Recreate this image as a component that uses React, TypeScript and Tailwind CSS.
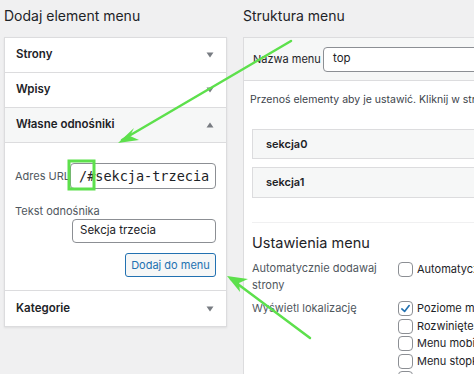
import React from 'react';

const font = { fontFamily: 'Inter, "Noto Sans", sans-serif' };

function Caret({ up = false }: { up?: boolean }) {
  return (
    <svg width="8" height="6" viewBox="0 0 8 6" className="text-[#787c82]">
      {up ? <path d="M0.5 5.5 L4 0.5 L7.5 5.5 Z" fill="currentColor" /> : <path d="M0.5 0.5 L7.5 0.5 L4 5.5 Z" fill="currentColor" />}
    </svg>
  );
}

function Row({ title, up, shaded, last }: { title: string; up?: boolean; shaded?: boolean; last?: boolean }) {
  return (
    <div className={`flex items-center justify-between h-[35px] pl-[11px] pr-[12px] ${shaded ? 'bg-[#f6f7f7]' : 'bg-white'} ${last ? '' : 'border-b border-[#dcdcde]'}`}>
      <span className="text-[11.5px] font-semibold whitespace-nowrap text-[#1d2327]">{title}</span>
      <Caret up={up} />
    </div>
  );
}

function Box({ checked }: { checked?: boolean }) {
  return (
    <span className="w-[15px] h-[15px] shrink-0 rounded-[4px] border border-[#8c8f94] bg-white flex items-center justify-center">
      {checked && (
        <svg width="11" height="11" viewBox="0 0 12 12">
          <path d="M2 6.5 L5 9.2 L10 2.8" fill="none" stroke="#2271b1" strokeWidth="1.8" strokeLinecap="round" strokeLinejoin="round" />
        </svg>
      )}
    </span>
  );
}

export default function App() {
  const locations = [
    { label: 'Poziome menu na górze', checked: true },
    { label: 'Rozwinięte menu', checked: false },
    { label: 'Menu mobilne', checked: false },
    { label: 'Menu stopki', checked: false },
    { label: 'Menu społecznościowe', checked: false },
  ];

  return (
    <div className="relative w-[474px] h-[374px] overflow-hidden bg-[#f0f0f1] flex" style={font}>
      {/* left column */}
      <div className="w-[223px] ml-[4px] shrink-0 flex flex-col">
        <h2 className="h-[37px] shrink-0 pt-[6px] text-[14px] leading-[20px] whitespace-nowrap text-[#1d2327]">Dodaj element menu</h2>
        <div className="border border-[#dcdcde] bg-white shadow-[0_1px_2px_rgba(0,0,0,0.08)]">
          <Row title="Strony" />
          <Row title="Wpisy" />
          <Row title="Własne odnośniki" up shaded />
          <div className="border-b border-[#dcdcde] pl-[10px] pr-[10px] pt-[20px] pb-[13px] flex flex-col">
            <div className="flex items-center justify-between">
              <span className="text-[11px] whitespace-nowrap text-[#50575e]">Adres URL</span>
              <div className="w-[146px] h-[26px] rounded-[4px] border border-[#8c8f94] bg-white flex items-center pl-[8px] text-[13.5px] whitespace-nowrap overflow-hidden text-[#1d2327]" style={{ fontFamily: '"DejaVu Sans Mono", monospace' }}>
                /#sekcja-trzecia
              </div>
            </div>
            <span className="mt-[15px] text-[11px] leading-[14px] whitespace-nowrap text-[#50575e]">Tekst odnośnika</span>
            <div className="mt-[1px] self-end w-[144px] h-[24px] rounded-[4px] border border-[#8c8f94] bg-white flex items-center pl-[7px] text-[11.5px] whitespace-nowrap text-[#1d2327]">
              Sekcja trzecia
            </div>
            <div className="mt-[10px] self-end w-[91px] h-[24px] rounded-[3px] border border-[#2271b1] bg-[#f6f7f7] flex items-center justify-center text-[11px] whitespace-nowrap text-[#2271b1]">
              Dodaj do menu
            </div>
          </div>
          <Row title="Kategorie" last />
        </div>
      </div>

      {/* right column */}
      <div className="ml-[16px] w-[300px] shrink-0 flex flex-col">
        <h2 className="h-[37px] shrink-0 pt-[6px] text-[14px] leading-[20px] whitespace-nowrap text-[#1d2327]">Struktura menu</h2>
        <div className="shrink-0 border border-[#dcdcde] border-r-0 bg-white h-[400px]">
          <div className="h-[43px] bg-[#f6f7f7] border-b border-[#dcdcde] flex items-center pl-[9px]">
            <span className="w-[70px] shrink-0 text-[11px] whitespace-nowrap text-[#1d2327]">Nazwa menu</span>
            <div className="w-[220px] shrink-0 h-[25px] rounded-[4px] border border-[#8c8f94] bg-white flex items-center pl-[9px] text-[11.5px] text-[#1d2327]">top</div>
          </div>
          <div className="pl-[6px] pt-[11px]">
            <p className="text-[10.5px] leading-[16px] whitespace-nowrap text-[#3c434a]">Przenoś elementy aby je ustawić. Kliknij w strzałkę po prawej stronie</p>
            <div className="ml-[2px] mt-[21px] flex flex-col gap-[8px]">
              <div className="h-[30px] border border-[#dcdcde] bg-[#f6f7f7] flex items-center pl-[13px] text-[11px] font-semibold text-[#1d2327]">sekcja0</div>
              <div className="h-[31px] border border-[#dcdcde] bg-[#f6f7f7] flex items-center pl-[13px] text-[11px] font-semibold text-[#1d2327]">sekcja1</div>
            </div>
            <div className="ml-[2px] mt-[24px] border-t border-[#f0f0f1]" />
            <h3 className="ml-[2px] mt-[10px] text-[14.5px] leading-[20px] whitespace-nowrap text-[#1d2327]">Ustawienia menu</h3>
            <div className="ml-[2px] mt-[7px] flex">
              <span className="w-[146px] shrink-0 text-[11px] leading-[17px] text-[#50575e]">Automatycznie dodawaj<br />strony</span>
              <div className="flex items-start gap-[4px] pt-[2px]">
                <Box />
                <span className="text-[11px] leading-[15px] whitespace-nowrap text-[#1d2327]">Automatycznie dodawaj nowe</span>
              </div>
            </div>
            <div className="ml-[2px] mt-[6px] flex">
              <span className="w-[146px] shrink-0 text-[11px] leading-[17px] whitespace-nowrap text-[#50575e]">Wyświetl lokalizację</span>
              <div className="flex flex-col gap-[2.5px] pt-[1px]">
                {locations.map((l) => (
                  <div key={l.label} className="flex items-center gap-[4px]">
                    <Box checked={l.checked} />
                    <span className="text-[11px] leading-[15px] whitespace-nowrap text-[#1d2327]">{l.label}</span>
                  </div>
                ))}
              </div>
            </div>
          </div>
        </div>
      </div>

      {/* annotation overlay */}
      <svg className="absolute inset-0 pointer-events-none" width="474" height="374" viewBox="0 0 474 374">
        <g stroke="#5de04c" strokeWidth="2.5" fill="none" strokeLinecap="round">
          <line x1="291" y1="41" x2="122" y2="140" />
          <line x1="310" y1="338" x2="231" y2="279" />
          <rect x="69" y="161" width="25" height="28" strokeWidth="3" />
        </g>
        <path d="M118 143 L134 128 L130 136 L139 140 Z" fill="#5de04c" />
        <path d="M227 276 L248 279 L239 283 L240 292 Z" fill="#5de04c" />
      </svg>
    </div>
  );
}
